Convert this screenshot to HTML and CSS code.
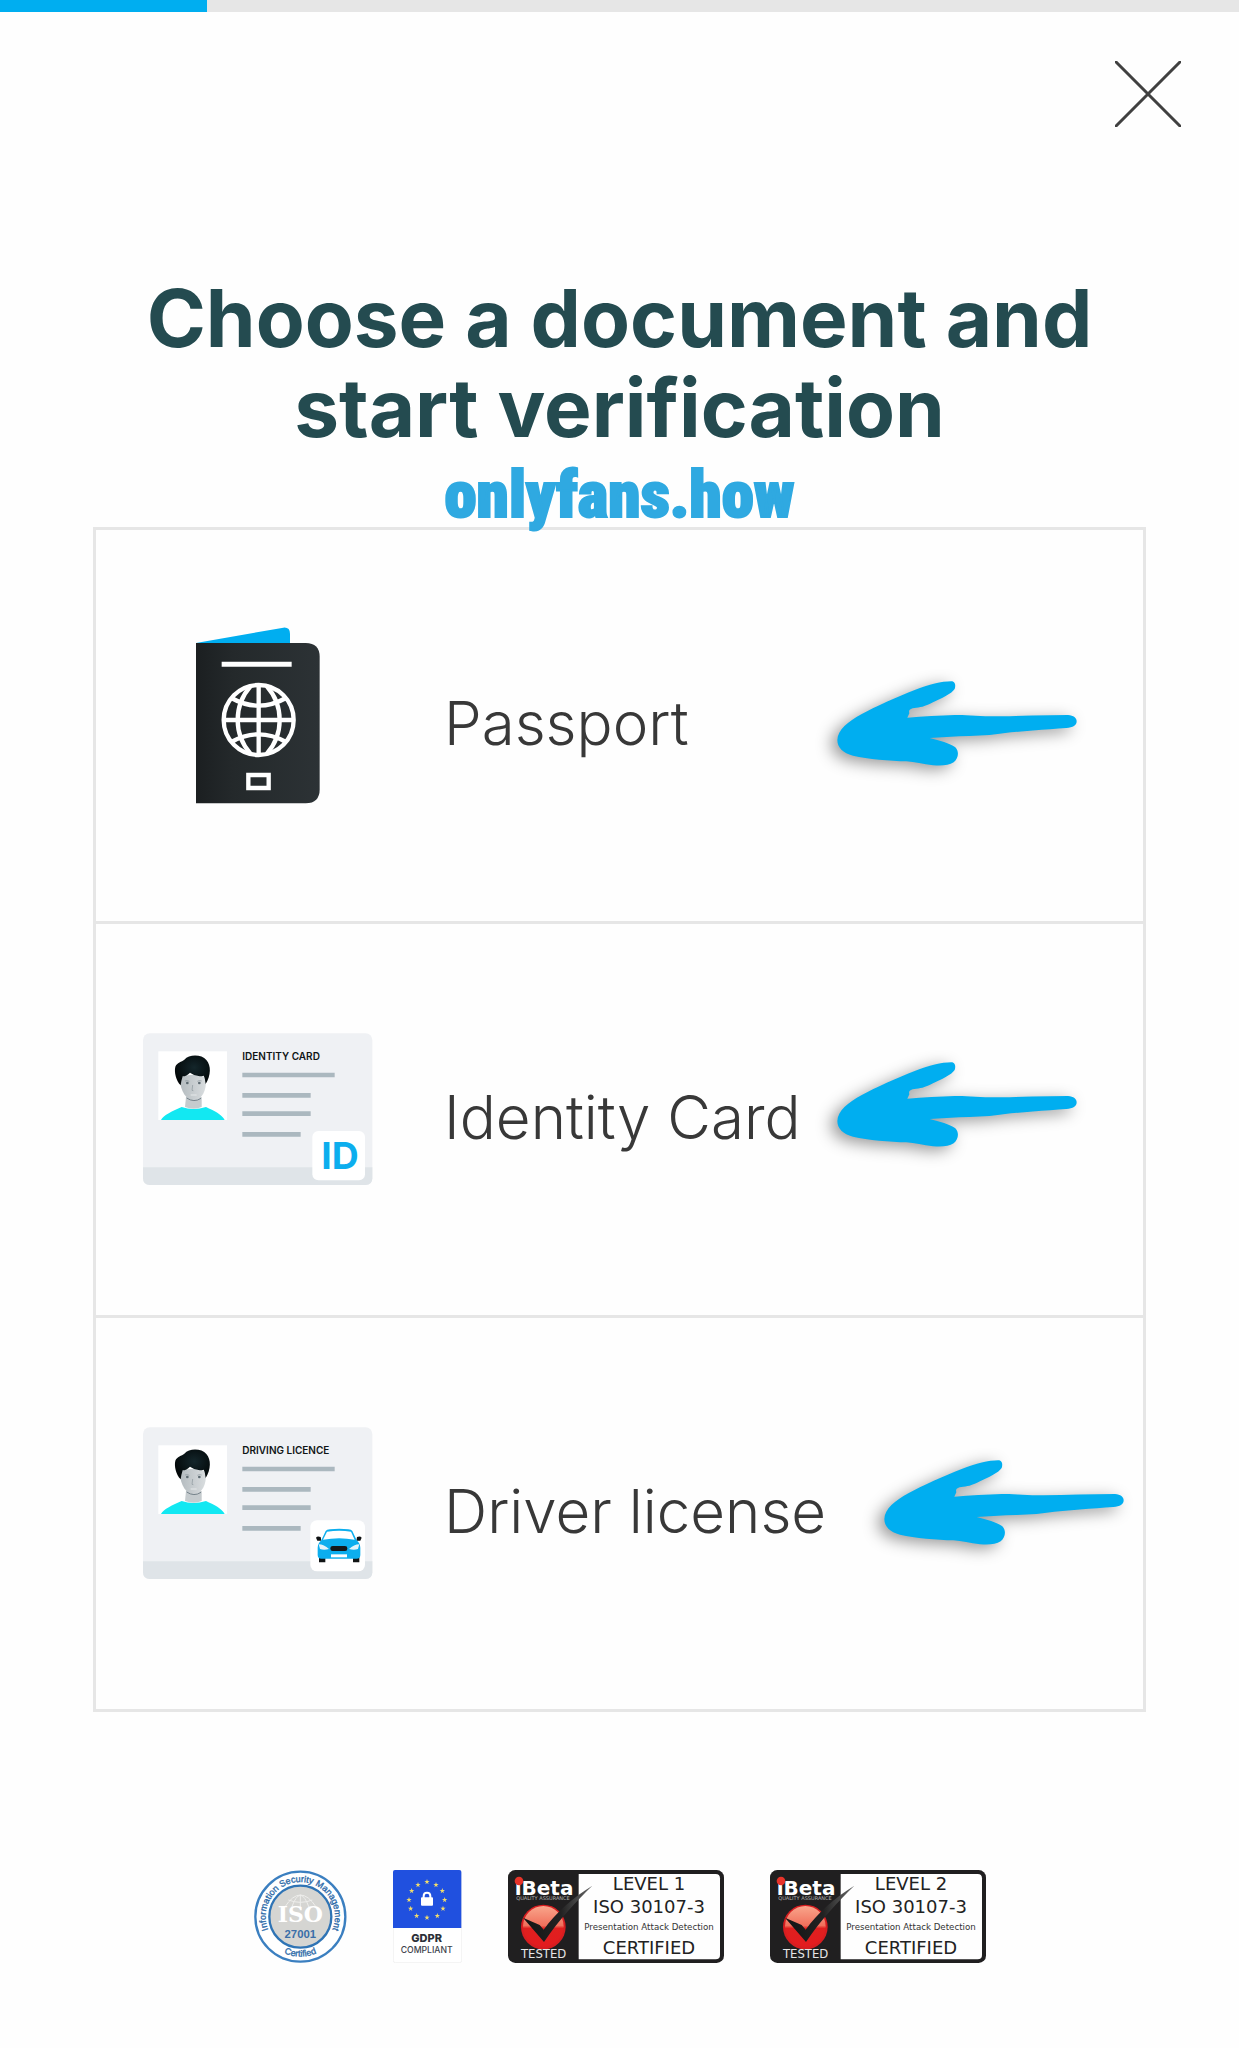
FILE: index.html
```html
<!DOCTYPE html>
<html lang="en">
<head>
    <meta charset="UTF-8">
    <meta name="viewport" content="width=device-width, initial-scale=1.0">
    <title>Choose a document</title>
    <link rel="stylesheet" href="styles.css">
</head>
<body>

<!-- Shared drawings -->
<svg class="defs" aria-hidden="true">
    <defs>
        <linearGradient id="cover" x1="0" x2="1" y1="0" y2="0">
            <stop offset="0" stop-color="#1b1f21"/>
            <stop offset=".3" stop-color="#24292b"/>
            <stop offset="1" stop-color="#2c3235"/>
        </linearGradient>
        <linearGradient id="face" x1="0" x2="1" y1="0" y2="0">
            <stop offset="0" stop-color="#b4bbbf"/>
            <stop offset="1" stop-color="#d9dddf"/>
        </linearGradient>
        <radialGradient id="hair" cx=".55" cy=".4" r=".6">
            <stop offset="0" stop-color="#14262b"/>
            <stop offset="1" stop-color="#020708"/>
        </radialGradient>
        <linearGradient id="ball" x1="0" x2="0" y1="0" y2="1">
            <stop offset="0" stop-color="#f9a68c"/>
            <stop offset=".48" stop-color="#f0705c"/>
            <stop offset=".55" stop-color="#e0201f"/>
            <stop offset="1" stop-color="#e31b1f"/>
        </linearGradient>
        <linearGradient id="tick" x1="0" x2="1" y1="0" y2="0">
            <stop offset="0" stop-color="#141414"/>
            <stop offset=".55" stop-color="#222"/>
            <stop offset="1" stop-color="#6a6a6a"/>
        </linearGradient>
        <symbol id="arrow" viewBox="100 75 750 285">
            <path fill="#00aef0" d="M113 270 C114 240 145 215 185 193 C230 168 290 142 345 120 C390 103 430 93 458 94 C468 97 468 108 465 117 C455 132 425 145 400 157 C380 167 368 172 350 173 C328 175 327 181 329 190 L323 203 C370 198 420 197 465 195 C500 194 540 199 590 199 C660 198 730 195 805 195 C822 196 831 204 831 214 C831 226 820 233 800 234 C740 239 660 243 600 251 C560 257 520 257 480 259 L390 264 C420 272 450 279 467 292 C479 304 477 325 462 337 C448 347 425 348 400 346 C370 342 345 336 320 334 C270 332 205 328 160 317 C130 309 113 293 113 270 Z"/>
        </symbol>
        <symbol id="card" viewBox="36 -16 696 630">
            <rect x="39" y="39" width="688" height="455" rx="20" fill="#eff1f4"/>
            <path fill="#dfe4e8" d="M39 441 H727 V474 Q727 494 707 494 H59 Q39 494 39 474 Z"/>
            <rect x="85" y="93" width="206" height="206" fill="#fff"/>
            <path fill="#12e8f2" d="M93 299 C100 284 128 272 155 260 Q190 272 228 260 C252 271 276 283 284 299 Z"/>
            <path fill="#c5cbce" d="M168 230 H215 V260 Q192 271 165 260 Z"/>
            <path fill="url(#face)" d="M149 176 C150 160 226 160 228 176 C230 210 216 238 192 241 C168 240 152 212 149 176 Z"/>
            <path fill="none" stroke="#76838b" stroke-width="3" d="M170 233 Q192 248 213 234"/>
            <path fill="url(#hair)" d="M152 195 C138 180 132 155 136 139 C141 126 155 125 163 118 C178 101 215 102 229 119 C244 136 243 165 227 191 C225 180 225 172 221 166 Q200 172 180 157 Q170 168 158 168 Q154 180 152 195 Z"/>
            <circle cx="172" cy="188" r="4" fill="#5d6a71"/>
            <circle cx="208" cy="188" r="4" fill="#5d6a71"/>
            <path fill="none" stroke="#8b969b" stroke-width="2" d="M165 182 Q171 179 178 183 M202 183 Q208 179 215 182 M188 194 L186 210 L190 211"/>
            <path fill="none" stroke="#e6e9ea" stroke-width="3" d="M182 224 H200"/>
            <path fill="none" stroke="#abb8bf" stroke-width="14" d="M337 164 H614 M337 225 H542 M337 280 H542 M337 342 H512"/>
        </symbol>
        <symbol id="star" viewBox="-10 -10 20 20">
            <path fill="#f2dc6b" d="M0 -8 L2 -2 L8 -2 L3 2 L5 8 L0 4 L-5 8 L-3 2 L-8 -2 L-2 -2 Z"/>
        </symbol>
        <symbol id="ibeta" viewBox="53 60 648 279">
            <rect x="53" y="60" width="648" height="279" rx="22" fill="#201f20"/>
            <path fill="#fefefe" d="M265 72 H676 Q689 72 689 85 V315 Q689 328 676 328 H265 Z"/>
            <text class="ibeta-logo" x="73" y="136">iBeta</text>
            <circle cx="86" cy="93" r="13" fill="#e6332a"/>
            <text class="ibeta-tagline" x="158" y="150">QUALITY ASSURANCE</text>
            <circle cx="159" cy="231" r="67" fill="#d71d20"/>
            <circle cx="159" cy="229" r="61" fill="url(#ball)"/>
            <path fill="url(#tick)" d="M98 203 L148 225 L160 239 C195 190 250 140 306 107 C260 152 205 210 161 276 Z"/>
            <text class="ibeta-tested" x="160" y="324">TESTED</text>
        </symbol>
    </defs>
</svg>

<div class="progress"><div class="progress-bar"></div></div>

<header class="header">
    <button class="close" type="button" aria-label="Close">
        <svg viewBox="0 0 66 66"><path fill="none" stroke="#404040" stroke-width="3" stroke-linecap="round" d="M1 1 L65 65 M65 1 L1 65"/></svg>
    </button>
</header>

<main class="content">
    <h1>Choose a document and start verification</h1>
    <p class="site">onlyfans.how</p>

    <div class="documents">
        <button class="document" type="button">
            <svg class="document-icon" viewBox="-84 31 696 630" aria-hidden="true">
                <path fill="#00aef0" d="M78 97 L340 51 Q360 49 360 69 V100 H78 Z"/>
                <path fill="url(#cover)" d="M78 97 H407 Q449 97 449 139 V536 Q449 578 407 578 H78 Z"/>
                <path fill="#fff" d="M155 153 H365 V168 H155 Z"/>
                <g fill="none" stroke="#fff" stroke-width="13">
                    <circle cx="266" cy="328" r="105"/>
                    <path d="M266 223 V433 M161 328 H371"/>
                    <path d="M242 226 C190 285 190 371 242 430 M290 226 C342 285 342 371 290 430"/>
                    <path d="M184 262 Q266 308 348 262 M184 394 Q266 348 348 394"/>
                    <path d="M235 493 H296 V532 H235 Z"/>
                </g>
            </svg>
            <span class="document-name">Passport</span>
            <svg class="arrow arrow-passport" aria-hidden="true"><use href="#arrow"/></svg>
        </button>

        <button class="document" type="button">
            <svg class="document-icon" viewBox="36 -16 696 630" aria-hidden="true">
                <use href="#card" x="36" y="-16" width="696" height="630"/>
                <text class="card-title" x="337" y="120">IDENTITY CARD</text>
                <rect x="547" y="332" width="158" height="148" rx="18" fill="#fff"/>
                <text class="card-id" x="630" y="447">ID</text>
            </svg>
            <span class="document-name">Identity Card</span>
            <svg class="arrow arrow-identity" aria-hidden="true"><use href="#arrow"/></svg>
        </button>

        <button class="document" type="button">
            <svg class="document-icon" viewBox="36 -16 696 630" aria-hidden="true">
                <use href="#card" x="36" y="-16" width="696" height="630"/>
                <text class="card-title" x="337" y="120">DRIVING LICENCE</text>
                <rect x="541" y="318" width="164" height="153" rx="20" fill="#fff"/>
                <path fill="#101314" d="M567 428 H586 V444 H567 Z M669 428 H688 V444 H669 Z M558 370 Q562 364 572 368 L574 379 H562 Z M695 370 Q691 364 681 368 L679 379 H691 Z"/>
                <path fill="#0caeee" d="M587 350 Q590 345 600 345 Q628 342 655 345 Q664 345 667 350 L680 378 Q690 386 691 400 V422 Q691 433 680 433 H574 Q563 433 563 422 V400 Q564 386 574 378 Z"/>
                <path fill="#fff" d="M591 352 Q628 347 663 352 L674 376 Q628 367 579 376 Z"/>
                <path fill="#e3f3fa" d="M566 390 Q582 390 597 404 Q582 409 570 404 Z M688 390 Q672 390 657 404 Q672 409 684 404 Z"/>
                <rect x="601" y="395" width="51" height="15" rx="7" fill="#15191b"/>
                <rect x="603" y="420" width="48" height="9" fill="#fff"/>
            </svg>
            <span class="document-name">Driver license</span>
            <svg class="arrow arrow-licence" aria-hidden="true"><use href="#arrow"/></svg>
        </button>
    </div>
</main>

<footer class="badges">
    <svg class="badge badge-iso" viewBox="42 60 279 279">
        <defs>
            <path id="isoTop" d="M109 275 A104 104 0 1 1 253 275"/>
            <path id="isoBottom" d="M61 200 A120 120 0 0 0 301 200"/>
        </defs>
        <circle cx="181" cy="200" r="135" fill="#fff" stroke="#3b7fc0" stroke-width="7"/>
        <circle cx="181" cy="200" r="93" fill="#d5d5d2" stroke="#2f74b5" stroke-width="7"/>
        <g fill="none" stroke="#eeeeec" stroke-width="3">
            <path d="M134 172 Q181 98 229 172 M155 172 Q181 100 207 172 M181 134 V172 M145 150 Q181 164 217 150"/>
        </g>
        <text class="iso-name" x="181" y="217">ISO</text>
        <text class="iso-number" x="181" y="263">27001</text>
        <text class="iso-ring"><textPath href="#isoTop" startOffset="50%">Information Security Management</textPath></text>
        <text class="iso-ring"><textPath href="#isoBottom" startOffset="50%">Certified</textPath></text>
    </svg>

    <svg class="badge badge-gdpr" viewBox="459 60 207 279">
        <rect x="460" y="61" width="205" height="277" rx="6" fill="#fff" stroke="#ececec" stroke-width="2"/>
        <path fill="#2050df" d="M459 66 Q459 60 465 60 H658 Q664 60 664 66 V234 H459 Z"/>
        <use href="#star" x="551" y="85" width="20" height="20"/>
        <use href="#star" x="578" y="94" width="20" height="20"/>
        <use href="#star" x="597" y="112" width="20" height="20"/>
        <use href="#star" x="604" y="139" width="20" height="20"/>
        <use href="#star" x="599" y="165" width="20" height="20"/>
        <use href="#star" x="582" y="187" width="20" height="20"/>
        <use href="#star" x="551" y="192" width="20" height="20"/>
        <use href="#star" x="520" y="187" width="20" height="20"/>
        <use href="#star" x="502" y="165" width="20" height="20"/>
        <use href="#star" x="497" y="139" width="20" height="20"/>
        <use href="#star" x="505" y="112" width="20" height="20"/>
        <use href="#star" x="524" y="94" width="20" height="20"/>
        <rect x="543" y="142" width="36" height="25" rx="3" fill="#fff"/>
        <path fill="none" stroke="#fff" stroke-width="6" d="M551 144 V138 Q551 128 561 128 Q571 128 571 138 V144"/>
        <text class="gdpr-name" x="560" y="275">GDPR</text>
        <text class="gdpr-note" x="560" y="310">COMPLIANT</text>
    </svg>

    <svg class="badge badge-ibeta" viewBox="53 60 648 279">
        <use href="#ibeta" x="53" y="60" width="648" height="279"/>
        <text class="ibeta-level" x="476" y="121">LEVEL 1</text>
        <text class="ibeta-level" x="476" y="190">ISO 30107-3</text>
        <text class="ibeta-note" x="476" y="240">Presentation Attack Detection</text>
        <text class="ibeta-level" x="476" y="311">CERTIFIED</text>
    </svg>

    <svg class="badge badge-ibeta" viewBox="53 60 648 279">
        <use href="#ibeta" x="53" y="60" width="648" height="279"/>
        <text class="ibeta-level" x="476" y="121">LEVEL 2</text>
        <text class="ibeta-level" x="476" y="190">ISO 30107-3</text>
        <text class="ibeta-note" x="476" y="240">Presentation Attack Detection</text>
        <text class="ibeta-level" x="476" y="311">CERTIFIED</text>
    </svg>
</footer>

</body>
</html>
```
FILE: styles.css
```css
body {
    font-family: Inter, "Open Sans", sans-serif;
    margin: 0;
    background-color: #fefefe;
    color: #383838;
}
.defs {
    position: absolute;
    width: 0;
    height: 0;
}
.progress {
    height: 12px;
    background-color: #e6e6e6;
}
.progress-bar {
    width: 16.7%;
    height: 100%;
    background-color: #00aef0;
}
.header {
    display: flex;
    justify-content: flex-end;
    padding: 49px 58px 0;
}
.close {
    width: 66px;
    height: 66px;
    padding: 0;
    border: none;
    background: none;
    cursor: pointer;
}
.close svg {
    display: block;
}
.content {
    padding: 146px 93px 0;
}
h1 {
    margin: 0;
    font-size: 80px;
    font-weight: 700;
    line-height: 90px;
    text-align: center;
    color: #244b50;
}
.site {
    margin: 0;
    padding-top: 10px;
    font-family: Impact, "Roboto Condensed", "Liberation Sans", sans-serif;
    font-size: 65px;
    font-weight: 900;
    line-height: 64px;
    text-align: center;
    color: #2fa9e1;
    -webkit-text-stroke: 2px #2fa9e1;
}
.documents {
    display: flex;
    flex-direction: column;
    border: 3px solid #e6e6e6;
}
.document {
    position: relative;
    display: flex;
    align-items: center;
    gap: 70px;
    height: 391px;
    padding: 0 46px;
    border: none;
    background: none;
    font-family: inherit;
    color: inherit;
    text-align: left;
    cursor: pointer;
}
.document + .document {
    height: 394px;
    border-top: 3px solid #e6e6e6;
}
.document-icon {
    flex: none;
    width: 232px;
    height: 210px;
}
.document-name {
    padding-bottom: 6px;
    font-size: 60px;
    font-weight: 300;
    line-height: 72px;
}
.card-title {
    font-size: 30px;
    font-weight: 600;
    fill: #101516;
}
.card-id {
    font-size: 112px;
    font-weight: 700;
    text-anchor: middle;
    fill: #0caeee;
}

/* Arrows lie over the rows */
.arrow {
    position: absolute;
    right: 60px;
    width: 250px;
    height: 95px;
    overflow: visible;
    filter: drop-shadow(-6px 4px 8px rgba(0, 0, 0, 0.4));
}
.arrow-passport {
    top: 145px;
}
.arrow-identity {
    top: 132px;
}
.arrow-licence {
    top: 136px;
    right: 13px;
}

.badges {
    display: flex;
    justify-content: center;
    gap: 46px;
    padding: 158px 20px 85px;
}
.badge {
    height: 93px;
}
.badge text {
    text-anchor: middle;
}
.badge-iso {
    width: 93px;
}
.badge-gdpr {
    width: 69px;
}
.badge-ibeta {
    width: 216px;
}
.iso-name {
    font-family: "DejaVu Serif", serif;
    font-size: 66px;
    font-weight: 700;
    fill: #fff;
}
.iso-number {
    font-family: "Liberation Sans", sans-serif;
    font-size: 34px;
    font-weight: 700;
    fill: #3a6ea8;
}
.iso-ring {
    font-family: "Liberation Sans", sans-serif;
    font-size: 27px;
    fill: #2c6aa8;
    stroke: #2c6aa8;
}
.gdpr-name {
    font-size: 33px;
    font-weight: 800;
    fill: #2b2f38;
}
.gdpr-note {
    font-size: 26px;
    font-weight: 500;
    fill: #3d424b;
}
.badge-ibeta text {
    font-family: "DejaVu Sans", sans-serif;
}
.ibeta-level {
    font-size: 54px;
    fill: #222;
}
.ibeta-note {
    font-size: 26px;
    fill: #333;
}
.ibeta-logo,
.ibeta-tagline,
.ibeta-tested {
    font-family: "DejaVu Sans", sans-serif;
    fill: #fff;
}
.ibeta-logo {
    font-size: 60px;
    font-weight: 700;
}
.badge .ibeta-logo {
    text-anchor: start;
}
.ibeta-tagline {
    font-size: 15px;
    fill: #b5b5b5;
}
.ibeta-tested {
    font-size: 35px;
    fill: #e6e6e6;
}
.ibeta-tagline,
.ibeta-tested {
    text-anchor: middle;
}
```
